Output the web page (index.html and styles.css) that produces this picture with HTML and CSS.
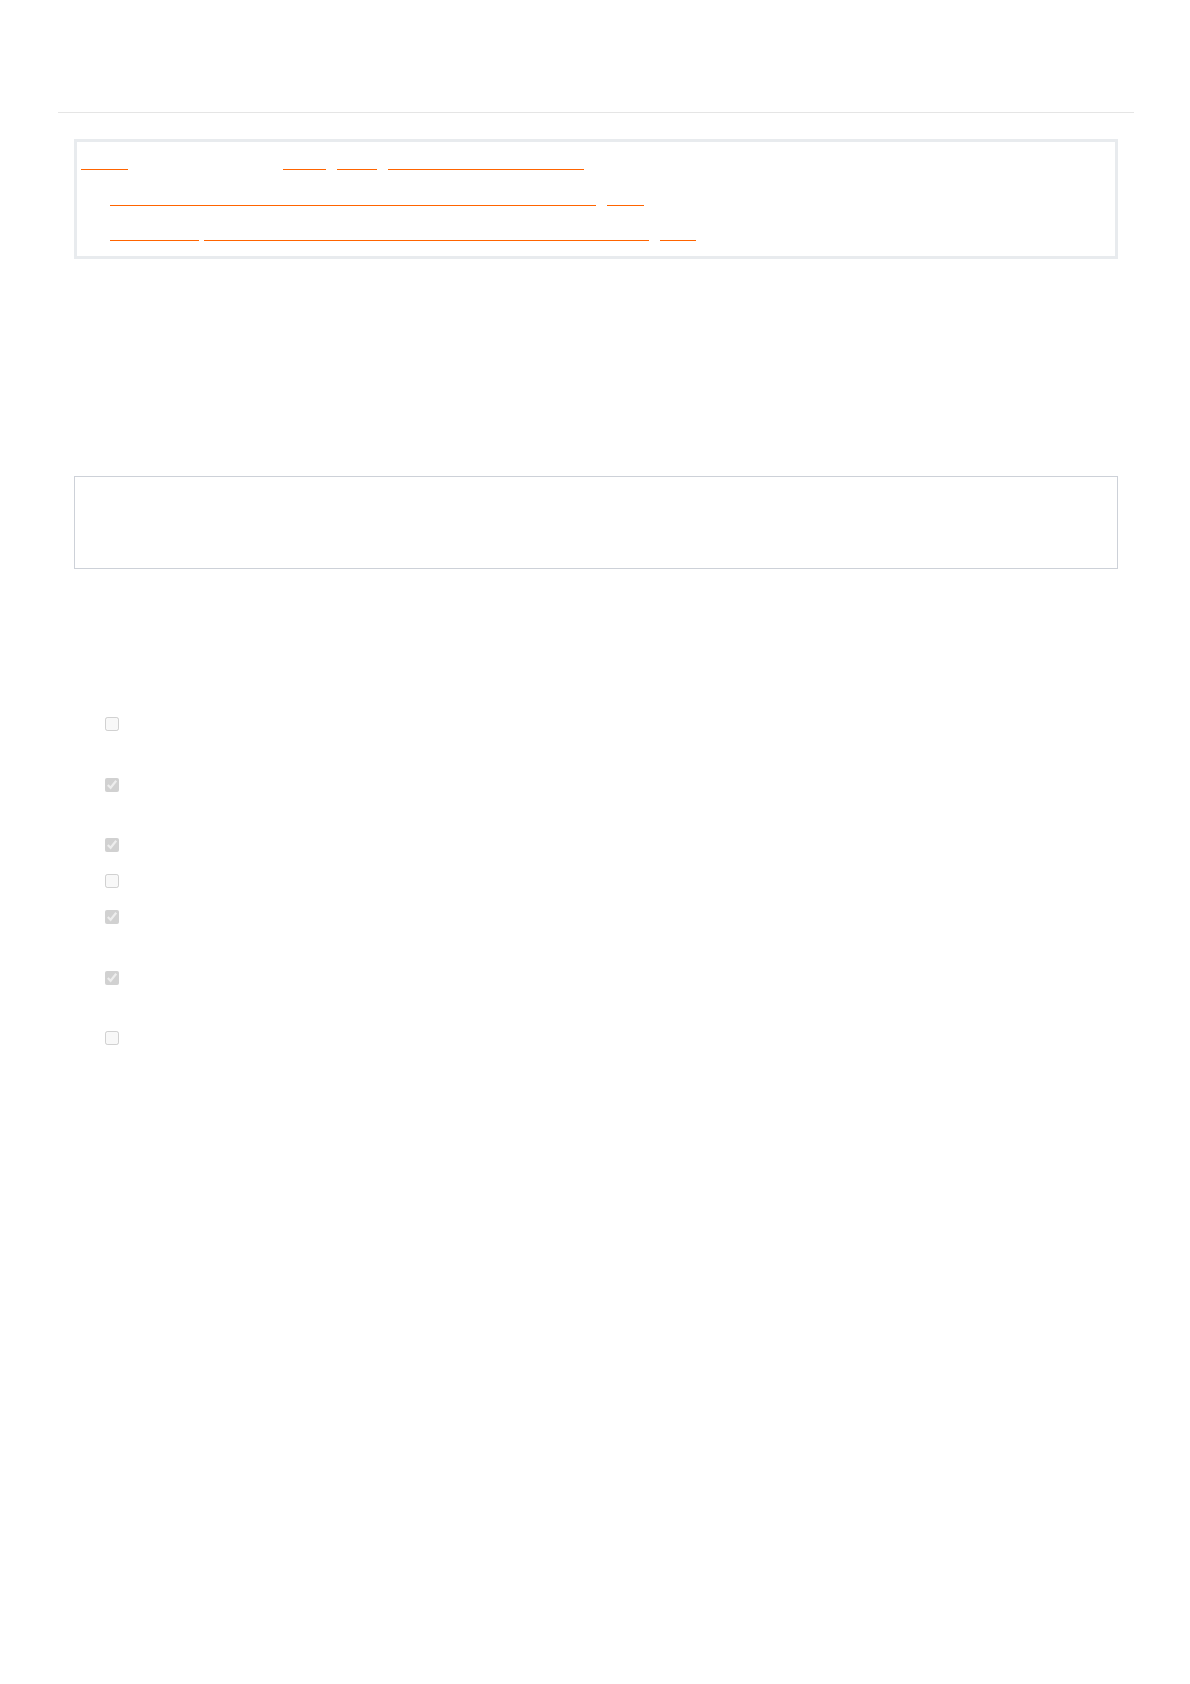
FILE: index.html
```html
<!DOCTYPE html>
<html lang="en">
<head>
    <meta charset="UTF-8">
    <meta name="viewport" content="width=device-width, initial-scale=1.0">
    <title>Notes</title>
    <link rel="stylesheet" href="styles.css">
</head>
<body>
    <div class="page">
        <div class="page-header"></div>

        <div class="toc">
            <div class="toc-row">
                <a class="toc-link" href="#" style="margin-left: 4px; width: 47px;"></a>
                <a class="toc-link" href="#" style="margin-left: 155px; width: 43px;"></a>
                <a class="toc-link" href="#" style="margin-left: 11px; width: 40px;"></a>
                <a class="toc-link" href="#" style="margin-left: 11px; width: 196px;"></a>
            </div>
            <div class="toc-row sub">
                <a class="toc-link" href="#" style="width: 486px;"></a>
                <a class="toc-link" href="#" style="margin-left: 11px; width: 37px;"></a>
            </div>
            <div class="toc-row sub last">
                <a class="toc-link" href="#" style="width: 89px;"></a>
                <a class="toc-link" href="#" style="margin-left: 5px; width: 445px;"></a>
                <a class="toc-link" href="#" style="margin-left: 11px; width: 36px;"></a>
            </div>
        </div>

        <div class="note-box"></div>

        <ul class="tasks">
            <li class="task long"><input type="checkbox" disabled></li>
            <li class="task long"><input type="checkbox" disabled checked></li>
            <li class="task"><input type="checkbox" disabled checked></li>
            <li class="task"><input type="checkbox" disabled></li>
            <li class="task long"><input type="checkbox" disabled checked></li>
            <li class="task long"><input type="checkbox" disabled checked></li>
            <li class="task"><input type="checkbox" disabled></li>
        </ul>
    </div>
</body>
</html>
```

FILE: styles.css
```css
body {
    font-family: "Open Sans", "Liberation Sans", sans-serif;
    margin: 0;
    background-color: #fff;
}
.page {
    width: 1076px;
    margin-left: 58px;
}
.page-header {
    height: 112px;
    border-bottom: 1px solid #e5e5e5;
}
.toc {
    margin: 26px 16px 0;
    height: 114px;
    border: 3px solid #e8ebee;
}
.toc-row {
    display: flex;
    align-items: flex-end;
    height: 29px;
}
.toc-row.sub {
    height: 36px;
    padding-left: 33px;
}
.toc-row.last {
    height: 35px;
}
.toc-link {
    display: block;
    height: 0;
    margin-bottom: 1px;
    border-bottom: 1px solid #ff6400;
}
.note-box {
    margin: 217px 16px 0;
    height: 91px;
    border: 1px solid #cdd1d8;
}
.tasks {
    list-style: none;
    margin: 148px 0 0;
    padding: 0 0 0 47px;
}
.task {
    height: 36px;
}
.task.long {
    height: 60.5px;
}
.task input {
    display: block;
    margin: 0;
    width: 14px;
    height: 14px;
}
```
